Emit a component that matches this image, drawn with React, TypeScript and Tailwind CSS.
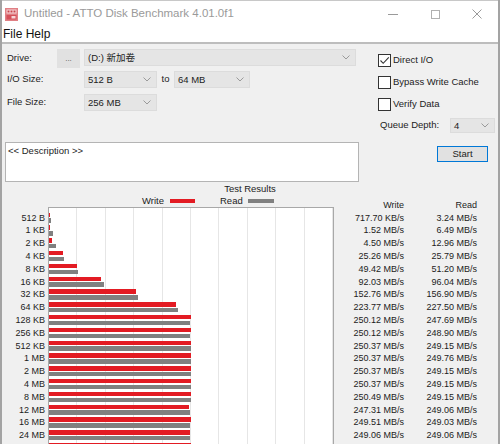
import React from 'react';

interface Row {
  size: string;
  w: number;
  r: number;
  wText: string;
  rText: string;
}

const rows: Row[] = [
  { size: '512 B', w: 0.7177, r: 3.24, wText: '717.70 KB/s', rText: '3.24 MB/s' },
  { size: '1 KB', w: 1.52, r: 6.49, wText: '1.52 MB/s', rText: '6.49 MB/s' },
  { size: '2 KB', w: 4.5, r: 12.96, wText: '4.50 MB/s', rText: '12.96 MB/s' },
  { size: '4 KB', w: 25.26, r: 25.79, wText: '25.26 MB/s', rText: '25.79 MB/s' },
  { size: '8 KB', w: 49.42, r: 51.2, wText: '49.42 MB/s', rText: '51.20 MB/s' },
  { size: '16 KB', w: 92.03, r: 96.04, wText: '92.03 MB/s', rText: '96.04 MB/s' },
  { size: '32 KB', w: 152.76, r: 156.9, wText: '152.76 MB/s', rText: '156.90 MB/s' },
  { size: '64 KB', w: 223.77, r: 227.5, wText: '223.77 MB/s', rText: '227.50 MB/s' },
  { size: '128 KB', w: 250.12, r: 247.69, wText: '250.12 MB/s', rText: '247.69 MB/s' },
  { size: '256 KB', w: 250.12, r: 248.9, wText: '250.12 MB/s', rText: '248.90 MB/s' },
  { size: '512 KB', w: 250.37, r: 249.15, wText: '250.37 MB/s', rText: '249.15 MB/s' },
  { size: '1 MB', w: 250.37, r: 249.76, wText: '250.37 MB/s', rText: '249.76 MB/s' },
  { size: '2 MB', w: 250.37, r: 249.15, wText: '250.37 MB/s', rText: '249.15 MB/s' },
  { size: '4 MB', w: 250.37, r: 249.15, wText: '250.37 MB/s', rText: '249.15 MB/s' },
  { size: '8 MB', w: 250.49, r: 249.15, wText: '250.49 MB/s', rText: '249.15 MB/s' },
  { size: '12 MB', w: 247.31, r: 249.06, wText: '247.31 MB/s', rText: '249.06 MB/s' },
  { size: '16 MB', w: 249.51, r: 249.03, wText: '249.51 MB/s', rText: '249.03 MB/s' },
  { size: '24 MB', w: 249.06, r: 249.06, wText: '249.06 MB/s', rText: '249.06 MB/s' },
];

// next row, only its bar top shows at the window's bottom edge
const cutRow = { w: 249.4, r: 249.1 };

// 10 grid divisions of 28.4px = 500 MB/s
const SCALE = 284 / 500;

function Chevron() {
  return (
    <svg width="8" height="5" viewBox="0 0 8 5" className="shrink-0">
      <polyline points="0.5,0.5 4,4 7.5,0.5" fill="none" stroke="#9a9a9a" strokeWidth="1" />
    </svg>
  );
}

function Combo({ value, className }: { value: string; className: string }) {
  return (
    <div
      className={`flex items-center justify-between bg-[#e5e5e5] border border-[#dcdcdc] pl-[3px] pr-[5px] leading-none ${className}`}
    >
      <span>{value}</span>
      <Chevron />
    </div>
  );
}

function Check({ label, checked }: { label: string; checked?: boolean }) {
  return (
    <div className="flex items-center h-[13px]">
      <div className="w-[13px] h-[13px] bg-white border border-[#333] flex items-center justify-center">
        {checked && (
          <svg width="11" height="11" viewBox="0 0 11 11">
            <polyline points="1.5,5.5 4.2,8.3 9.8,2.4" fill="none" stroke="#333" strokeWidth="1.1" />
          </svg>
        )}
      </div>
      <span className="ml-[2px]">{label}</span>
    </div>
  );
}

function AppIcon() {
  return (
    <svg width="13" height="13" viewBox="0 0 13 13">
      <rect x="0" y="0" width="13" height="13" fill="#e07f84" />
      <rect x="1.5" y="1.5" width="10" height="4" fill="#f6d6d8" />
      <rect x="2.5" y="2.5" width="2" height="2" fill="#c9444b" />
      <rect x="5.5" y="2.5" width="2" height="2" fill="#c9444b" />
      <rect x="8.5" y="2.5" width="2" height="2" fill="#c9444b" />
      <rect x="1.5" y="7" width="10" height="4.5" fill="#d5505a" />
      <rect x="6.5" y="8" width="4" height="2.5" fill="#f6d6d8" />
    </svg>
  );
}

function Bars({ w, r }: { w: number; r: number }) {
  return (
    <div className="h-[12.8px] pt-[1px] flex flex-col gap-[1.3px]">
      <div className="h-[4.5px] bg-[#e31b23]" style={{ width: Math.max(w * SCALE, 0.6) }} />
      <div className="h-[4.5px] bg-[#808080]" style={{ width: Math.max(r * SCALE, 0.6) }} />
    </div>
  );
}

export default function App() {
  return (
    <div className="w-[500px] h-[444px] overflow-hidden flex flex-col bg-[#f0f0f0] border-x-2 border-[#a3a3a3] font-['Liberation_Sans','Noto_Sans_CJK_SC',Arial,sans-serif] text-[9.5px] text-[#1c1c1c]">
      {/* title bar */}
      <div className="h-[27px] shrink-0 bg-white flex items-center border-t border-[#c8c8c8]">
        <div className="ml-[3px]">
          <AppIcon />
        </div>
        <span className="ml-[6px] text-[11.5px] text-[#9a9a9a]">Untitled - ATTO Disk Benchmark 4.01.0f1</span>
        <div className="ml-auto flex h-full">
          <div className="w-[42px] flex items-center justify-center">
            <div className="w-[10px] h-px bg-[#9a9a9a]" />
          </div>
          <div className="w-[42px] flex items-center justify-center">
            <div className="w-[9px] h-[9px] border border-[#b0b0b0]" />
          </div>
          <div className="w-[42px] flex items-center justify-center">
            <svg width="10" height="10" viewBox="0 0 10 10">
              <path d="M0.5 0.5 L9.5 9.5 M9.5 0.5 L0.5 9.5" stroke="#9a9a9a" strokeWidth="1" />
            </svg>
          </div>
        </div>
      </div>

      {/* menu */}
      <div className="h-[17px] shrink-0 bg-white border-b-2 border-[#bdbdbd] text-[12px] leading-[15px] pl-[1px] text-[#111]">
        File Help
      </div>

      {/* controls */}
      <div className="flex shrink-0">
        <div className="w-[358px] flex flex-col pt-[5px]">
          <div className="flex h-[18px] items-start">
            <span className="w-[55px] pl-[5px] leading-[17px]">Drive:</span>
            <div className="w-[23px] h-[19px] bg-[#e1e1e1] flex items-center justify-center text-[8px] text-[#555]">...</div>
            <Combo value="(D:) 新加卷" className="ml-[4px] w-[272px] h-[17px]" />
          </div>
          <div className="flex h-[17px] mt-[4px] items-center">
            <span className="w-[82px] pl-[5px]">I/O Size:</span>
            <Combo value="512 B" className="w-[73px] h-[17px]" />
            <span className="w-[17px] text-center">to</span>
            <Combo value="64 MB" className="w-[76px] h-[17px]" />
          </div>
          <div className="flex h-[17px] mt-[6px] items-center">
            <span className="w-[82px] pl-[5px]">File Size:</span>
            <Combo value="256 MB" className="w-[73px] h-[17px]" />
          </div>
          <div className="mt-[31px] ml-[3px] w-[354px] h-[40px] bg-white border border-[#b4b4b4] px-[2px] pt-[1px]">
            {'<< Description >>'}
          </div>
        </div>

        <div className="flex-1 flex flex-col pl-[18px] pt-[10px]">
          <Check label="Direct I/O" checked />
          <div className="mt-[9px]">
            <Check label="Bypass Write Cache" />
          </div>
          <div className="mt-[9px]">
            <Check label="Verify Data" />
          </div>
          <div className="mt-[7px] flex items-center h-[15px]">
            <span className="ml-[2px] w-[70px]">Queue Depth:</span>
            <Combo value="4" className="w-[45px] h-[15px]" />
          </div>
          <div className="mt-[13px] ml-[59px] w-[51px] h-[16px] bg-[#e1e1e1] border border-[#0078d7] flex items-center justify-center">
            Start
          </div>
        </div>
      </div>

      {/* results */}
      <div className="h-[12px] leading-[12px] text-center shrink-0 mt-px">Test Results</div>
      <div className="flex flex-1 min-h-0">
        <div className="w-[332px] flex flex-col">
          <div className="h-[12px] flex items-center pl-[140px] shrink-0">
            <span>Write</span>
            <div className="ml-[6px] w-[25px] h-[4px] bg-[#e31b23]" />
            <span className="ml-[25px]">Read</span>
            <div className="ml-[5px] w-[26px] h-[4px] bg-[#808080]" />
          </div>
          <div className="flex flex-1">
            <div className="w-[46px] pr-[3px] pt-[4.6px] text-right text-[9px]">
              {rows.map((r) => (
                <div key={r.size} className="h-[12.8px] leading-[12.8px]">
                  {r.size}
                </div>
              ))}
            </div>
            <div className="w-[286px] h-[260px] bg-white border border-[#a8a8a8] pt-[3.6px] bg-[repeating-linear-gradient(90deg,transparent_0px,transparent_27.4px,#e6e6e6_27.4px,#e6e6e6_28.4px)]">
              {rows.map((r) => (
                <Bars key={r.size} w={r.w} r={r.r} />
              ))}
              <Bars w={cutRow.w} r={cutRow.r} />
            </div>
          </div>
        </div>
        <div className="flex pt-[3.8px] text-[9px] text-right">
          <div className="w-[70px]">
            <div className="h-[12.8px] leading-[12.8px]">Write</div>
            {rows.map((r) => (
              <div key={r.size} className="h-[12.8px] leading-[12.8px]">
                {r.wText}
              </div>
            ))}
          </div>
          <div className="w-[73px]">
            <div className="h-[12.8px] leading-[12.8px]">Read</div>
            {rows.map((r) => (
              <div key={r.size} className="h-[12.8px] leading-[12.8px]">
                {r.rText}
              </div>
            ))}
          </div>
        </div>
      </div>
    </div>
  );
}
